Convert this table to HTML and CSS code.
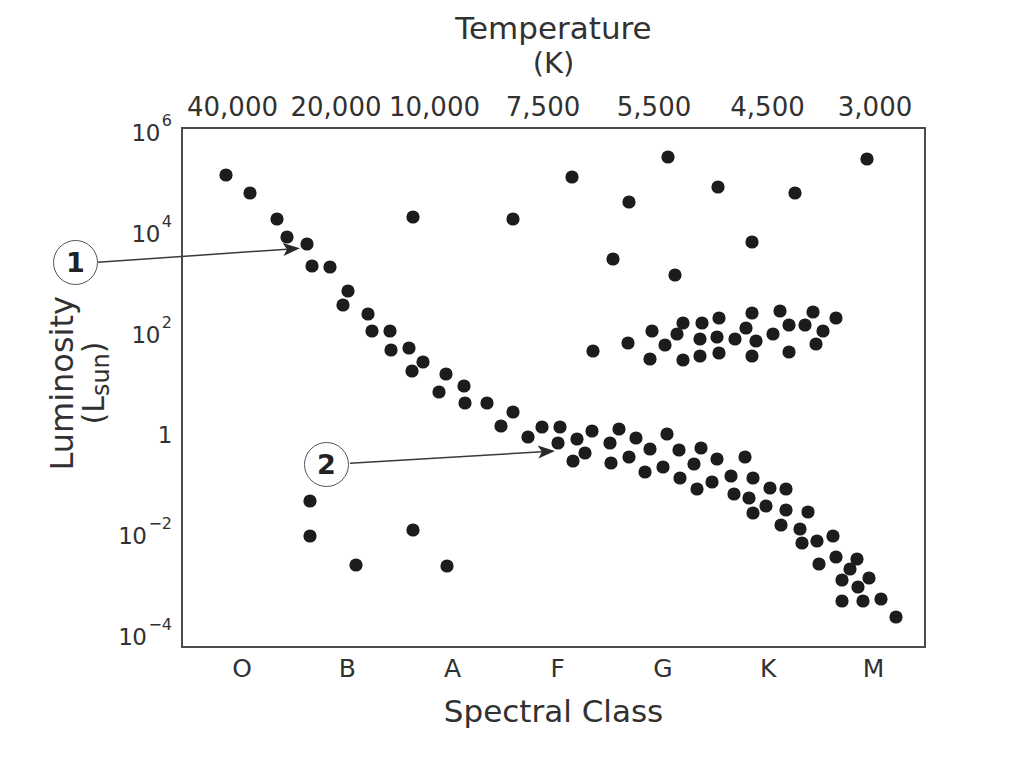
FILE: index.html
```html
<!DOCTYPE html>
<html lang="en">
<head>
<meta charset="utf-8">
<title>Hertzsprung–Russell Diagram</title>
<link rel="stylesheet" href="styles.css">
</head>
<body>
<figure class="hr">
  <div class="top-title"><span class="top-name">Temperature</span><span class="top-unit">(K)</span></div>

  <div class="temp-ticks">
    <span class="temp" style="left:51.5px">40,000</span>
    <span class="temp" style="left:155px">20,000</span>
    <span class="temp" style="left:253.5px">10,000</span>
    <span class="temp" style="left:362px">7,500</span>
    <span class="temp" style="left:473px">5,500</span>
    <span class="temp" style="left:586.5px">4,500</span>
    <span class="temp" style="left:694px">3,000</span>
  </div>

  <div class="y-title">
    <span class="y-name">Luminosity</span>
    <span class="y-unit">(L<sub>sun</sub>)</span>
  </div>

  <ol class="y-ticks">
    <li>10<sup>6</sup></li>
    <li>10<sup>4</sup></li>
    <li>10<sup>2</sup></li>
    <li>1</li>
    <li>10<sup>−2</sup></li>
    <li>10<sup>−4</sup></li>
  </ol>

  <div class="plot">
    <svg class="stars" viewBox="183 129 741 517" xmlns="http://www.w3.org/2000/svg">
      <!-- upper main sequence -->
      <circle cx="226" cy="175" r="6.6"/>
      <circle cx="250" cy="193" r="6.6"/>
      <circle cx="277" cy="219" r="6.6"/>
      <circle cx="287" cy="237" r="6.6"/>
      <circle cx="307" cy="244" r="6.6"/>
      <circle cx="312" cy="266" r="6.6"/>
      <circle cx="330" cy="267" r="6.6"/>
      <circle cx="348" cy="291" r="6.6"/>
      <circle cx="343" cy="305" r="6.6"/>
      <circle cx="368" cy="314" r="6.6"/>
      <circle cx="372" cy="331" r="6.6"/>
      <circle cx="390" cy="331" r="6.6"/>
      <circle cx="391" cy="350" r="6.6"/>
      <circle cx="409" cy="348" r="6.6"/>
      <circle cx="423" cy="362" r="6.6"/>
      <circle cx="412" cy="371" r="6.6"/>
      <circle cx="446" cy="374" r="6.6"/>
      <circle cx="464" cy="386" r="6.6"/>
      <circle cx="439" cy="392" r="6.6"/>
      <circle cx="465" cy="403" r="6.6"/>
      <circle cx="487" cy="403" r="6.6"/>
      <circle cx="513" cy="412" r="6.6"/>
      <circle cx="501" cy="426" r="6.6"/>
      <!-- supergiants -->
      <circle cx="413" cy="217" r="6.6"/>
      <circle cx="513" cy="219" r="6.6"/>
      <circle cx="572" cy="177" r="6.6"/>
      <circle cx="668" cy="157" r="6.6"/>
      <circle cx="867" cy="159" r="6.6"/>
      <circle cx="718" cy="187" r="6.6"/>
      <circle cx="795" cy="193" r="6.6"/>
      <circle cx="629" cy="202" r="6.6"/>
      <circle cx="752" cy="242" r="6.6"/>
      <circle cx="613" cy="259" r="6.6"/>
      <circle cx="675" cy="275" r="6.6"/>
      <!-- white dwarfs -->
      <circle cx="310" cy="501" r="6.6"/>
      <circle cx="310" cy="536" r="6.6"/>
      <circle cx="413" cy="530" r="6.6"/>
      <circle cx="356" cy="565" r="6.6"/>
      <circle cx="447" cy="566" r="6.6"/>
      <!-- giants -->
      <circle cx="593" cy="351" r="6.6"/>
      <circle cx="628" cy="343" r="6.6"/>
      <circle cx="652" cy="331" r="6.6"/>
      <circle cx="650" cy="359" r="6.6"/>
      <circle cx="677" cy="334" r="6.6"/>
      <circle cx="665" cy="345" r="6.6"/>
      <circle cx="683" cy="323" r="6.6"/>
      <circle cx="702" cy="323" r="6.6"/>
      <circle cx="719" cy="318" r="6.6"/>
      <circle cx="752" cy="313" r="6.6"/>
      <circle cx="780" cy="311" r="6.6"/>
      <circle cx="813" cy="312" r="6.6"/>
      <circle cx="836" cy="318" r="6.6"/>
      <circle cx="700" cy="339" r="6.6"/>
      <circle cx="717" cy="337" r="6.6"/>
      <circle cx="735" cy="339" r="6.6"/>
      <circle cx="746" cy="328" r="6.6"/>
      <circle cx="756" cy="341" r="6.6"/>
      <circle cx="773" cy="334" r="6.6"/>
      <circle cx="789" cy="325" r="6.6"/>
      <circle cx="805" cy="325" r="6.6"/>
      <circle cx="823" cy="331" r="6.6"/>
      <circle cx="816" cy="344" r="6.6"/>
      <circle cx="789" cy="352" r="6.6"/>
      <circle cx="752" cy="356" r="6.6"/>
      <circle cx="719" cy="353" r="6.6"/>
      <circle cx="700" cy="356" r="6.6"/>
      <circle cx="683" cy="360" r="6.6"/>
      <!-- lower main sequence -->
      <circle cx="528" cy="437" r="6.6"/>
      <circle cx="542" cy="427" r="6.6"/>
      <circle cx="560" cy="427" r="6.6"/>
      <circle cx="558" cy="443" r="6.6"/>
      <circle cx="577" cy="439" r="6.6"/>
      <circle cx="585" cy="453" r="6.6"/>
      <circle cx="573" cy="461" r="6.6"/>
      <circle cx="592" cy="431" r="6.6"/>
      <circle cx="619" cy="429" r="6.6"/>
      <circle cx="610" cy="443" r="6.6"/>
      <circle cx="611" cy="463" r="6.6"/>
      <circle cx="629" cy="457" r="6.6"/>
      <circle cx="636" cy="438" r="6.6"/>
      <circle cx="650" cy="449" r="6.6"/>
      <circle cx="645" cy="472" r="6.6"/>
      <circle cx="663" cy="467" r="6.6"/>
      <circle cx="667" cy="434" r="6.6"/>
      <circle cx="679" cy="450" r="6.6"/>
      <circle cx="694" cy="464" r="6.6"/>
      <circle cx="701" cy="448" r="6.6"/>
      <circle cx="717" cy="459" r="6.6"/>
      <circle cx="745" cy="457" r="6.6"/>
      <circle cx="680" cy="478" r="6.6"/>
      <circle cx="697" cy="489" r="6.6"/>
      <circle cx="712" cy="482" r="6.6"/>
      <circle cx="731" cy="476" r="6.6"/>
      <circle cx="753" cy="478" r="6.6"/>
      <circle cx="734" cy="494" r="6.6"/>
      <circle cx="749" cy="498" r="6.6"/>
      <circle cx="770" cy="488" r="6.6"/>
      <circle cx="786" cy="489" r="6.6"/>
      <circle cx="766" cy="506" r="6.6"/>
      <circle cx="753" cy="513" r="6.6"/>
      <circle cx="786" cy="510" r="6.6"/>
      <circle cx="808" cy="512" r="6.6"/>
      <circle cx="781" cy="525" r="6.6"/>
      <circle cx="800" cy="529" r="6.6"/>
      <circle cx="802" cy="543" r="6.6"/>
      <circle cx="817" cy="541" r="6.6"/>
      <circle cx="833" cy="536" r="6.6"/>
      <circle cx="836" cy="557" r="6.6"/>
      <circle cx="819" cy="564" r="6.6"/>
      <circle cx="857" cy="559" r="6.6"/>
      <circle cx="850" cy="569" r="6.6"/>
      <circle cx="842" cy="580" r="6.6"/>
      <circle cx="869" cy="578" r="6.6"/>
      <circle cx="858" cy="587" r="6.6"/>
      <circle cx="881" cy="599" r="6.6"/>
      <circle cx="842" cy="601" r="6.6"/>
      <circle cx="863" cy="601" r="6.6"/>
      <circle cx="896" cy="617" r="6.6"/>
    </svg>
  </div>

  <ul class="classes">
    <li>O</li><li>B</li><li>A</li><li>F</li><li>G</li><li>K</li><li>M</li>
  </ul>

  <div class="bottom-title">Spectral Class</div>

  <svg class="arrows" viewBox="0 0 1022 772" xmlns="http://www.w3.org/2000/svg">
    <line x1="98" y1="262.3" x2="287" y2="249.2"/>
    <polygon points="300,248.3 283.5,256 287,249.2 282.6,243"/>
    <line x1="350" y1="463.3" x2="542" y2="451.8"/>
    <polygon points="555,451 538.4,458.5 542,451.8 537.6,445.5"/>
  </svg>
  <div class="callout callout-1">1</div>
  <div class="callout callout-2">2</div>
</figure>
</body>
</html>
```

FILE: styles.css
```css
* {
  box-sizing: border-box;
}

html,
body {
  margin: 0;
  background: #ffffff;
}

body {
  font-family: "DejaVu Sans", Verdana, sans-serif;
  color: #313131;
}

.hr {
  position: relative;
  margin: 0;
  width: 1022px;
  height: 772px;
  display: grid;
  grid-template-columns: 181px 745px;
  grid-template-rows: 94px 33px 521px auto auto;
  align-content: start;
}

/* titles */
.top-title {
  grid-column: 2;
  grid-row: 1;
  display: flex;
  flex-direction: column;
  align-items: center;
  padding-top: 10px;
  line-height: normal;
}

.top-name {
  font-size: 31px;
}

.top-unit {
  font-size: 29px;
}

.bottom-title {
  grid-column: 2;
  grid-row: 5;
  margin-top: 15px;
  text-align: center;
  font-size: 31px;
  line-height: 31px;
}

.temp-ticks {
  grid-column: 2;
  grid-row: 2;
  position: relative;
  font-size: 26px;
  line-height: 26px;
}

.temp {
  position: absolute;
  top: 0;
  transform: translateX(-50%);
  white-space: nowrap;
}

/* luminosity axis */
.y-title {
  grid-column: 1;
  grid-row: 3;
  justify-self: start;
  align-self: center;
  margin: 0 0 8px 46px;
  writing-mode: vertical-rl;
  transform: rotate(180deg);
  text-align: center;
  line-height: 32px;
}

.y-name {
  display: block;
  font-size: 32px;
}

.y-unit {
  display: block;
  font-size: 30px;
}

.y-unit sub {
  font-size: 24px;
  vertical-align: -7px;
  line-height: 0;
}

.y-ticks {
  grid-column: 1;
  grid-row: 3;
  justify-self: end;
  margin: -5px 9px 0 0;
  padding: 0;
  list-style: none;
  display: flex;
  flex-direction: column;
  justify-content: space-between;
  align-items: flex-end;
  font-size: 23px;
  line-height: 22px;
  letter-spacing: -0.5px;
}

.y-ticks sup {
  position: relative;
  top: -15px;
  margin-left: 2px;
  font-size: 16px;
  line-height: 0;
  letter-spacing: 0;
  vertical-align: baseline;
}

/* plot frame */
.plot {
  grid-column: 2;
  grid-row: 3;
  border: 2px solid #4b4b4b;
}

.stars {
  display: block;
  width: 100%;
  height: 100%;
}

.stars circle {
  fill: #1c1c1c;
}

/* spectral classes */
.classes {
  grid-column: 2;
  grid-row: 4;
  margin: 0;
  padding: 8px 0 0 8.4px;
  list-style: none;
  display: flex;
  font-size: 25px;
  line-height: 25px;
}

.classes li {
  flex: 1;
  text-align: center;
}

/* callouts overlay */
.arrows {
  position: absolute;
  left: 0;
  top: 0;
  width: 1022px;
  height: 772px;
  pointer-events: none;
}

.arrows line {
  stroke: #3a3a3a;
  stroke-width: 1.5;
}

.arrows polygon {
  fill: #2a2a2a;
}

.callout {
  position: absolute;
  width: 45px;
  height: 45px;
  border: 1.5px solid #555555;
  border-radius: 50%;
  background: #ffffff;
  display: flex;
  align-items: center;
  justify-content: center;
  font-weight: bold;
  font-size: 27px;
  line-height: 1;
  color: #222222;
}

.callout-1 {
  left: 53px;
  top: 240px;
}

.callout-2 {
  left: 304px;
  top: 442px;
}
```
